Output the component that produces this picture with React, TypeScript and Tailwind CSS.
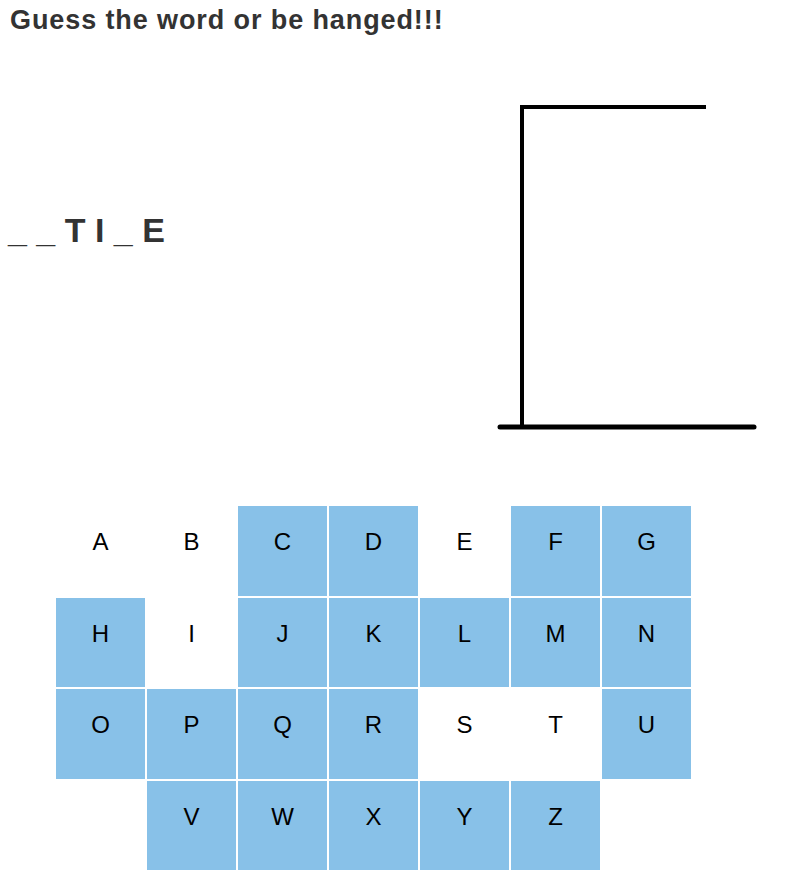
const LETTERS = "ABCDEFGHIJKLMNOPQRSTUVWXYZ".split("");
const USED = ["A", "B", "E", "I", "S", "T"];

const Gallows = () => (
  <svg width="262" height="340" viewBox="0 0 262 340" className="mr-[29px] mt-[60px] shrink-0">
    {/* post + beam */}
    <path d="M26 332 V12 H210" fill="none" stroke="#000" strokeWidth="4" strokeLinejoin="miter" />
    {/* base */}
    <line x1="4" y1="332" x2="258" y2="332" stroke="#000" strokeWidth="5" strokeLinecap="round" />
  </svg>
);

export default function App() {
  const word = "_ _ T I _ E";

  return (
    <div className="min-h-screen bg-white font-['Liberation_Sans',Arial,sans-serif] text-[#333]">
      <h1 className="pl-[10px] pt-[5px] text-[27px] font-bold leading-[30px] tracking-[0.9px]">
        Guess the word or be hanged!!!
      </h1>

      <div className="flex">
        <div className="flex-1 pl-[8px] pt-[175px]">
          <p className="whitespace-pre text-[34px] font-bold leading-[40px]">{word}</p>
        </div>
        <Gallows />
      </div>

      {/* keyboard */}
      <div className="ml-[55px] mt-[70px] flex w-[637px] flex-wrap justify-center">
        {LETTERS.map((l) => (
          <button
            key={l}
            className={`flex h-[91.5px] w-[91px] items-start justify-center border border-white pt-[22px] text-[24px] leading-[28px] text-black ${
              USED.includes(l) ? "bg-white" : "bg-[#88c1e8]"
            }`}
          >
            {l}
          </button>
        ))}
      </div>
    </div>
  );
}
